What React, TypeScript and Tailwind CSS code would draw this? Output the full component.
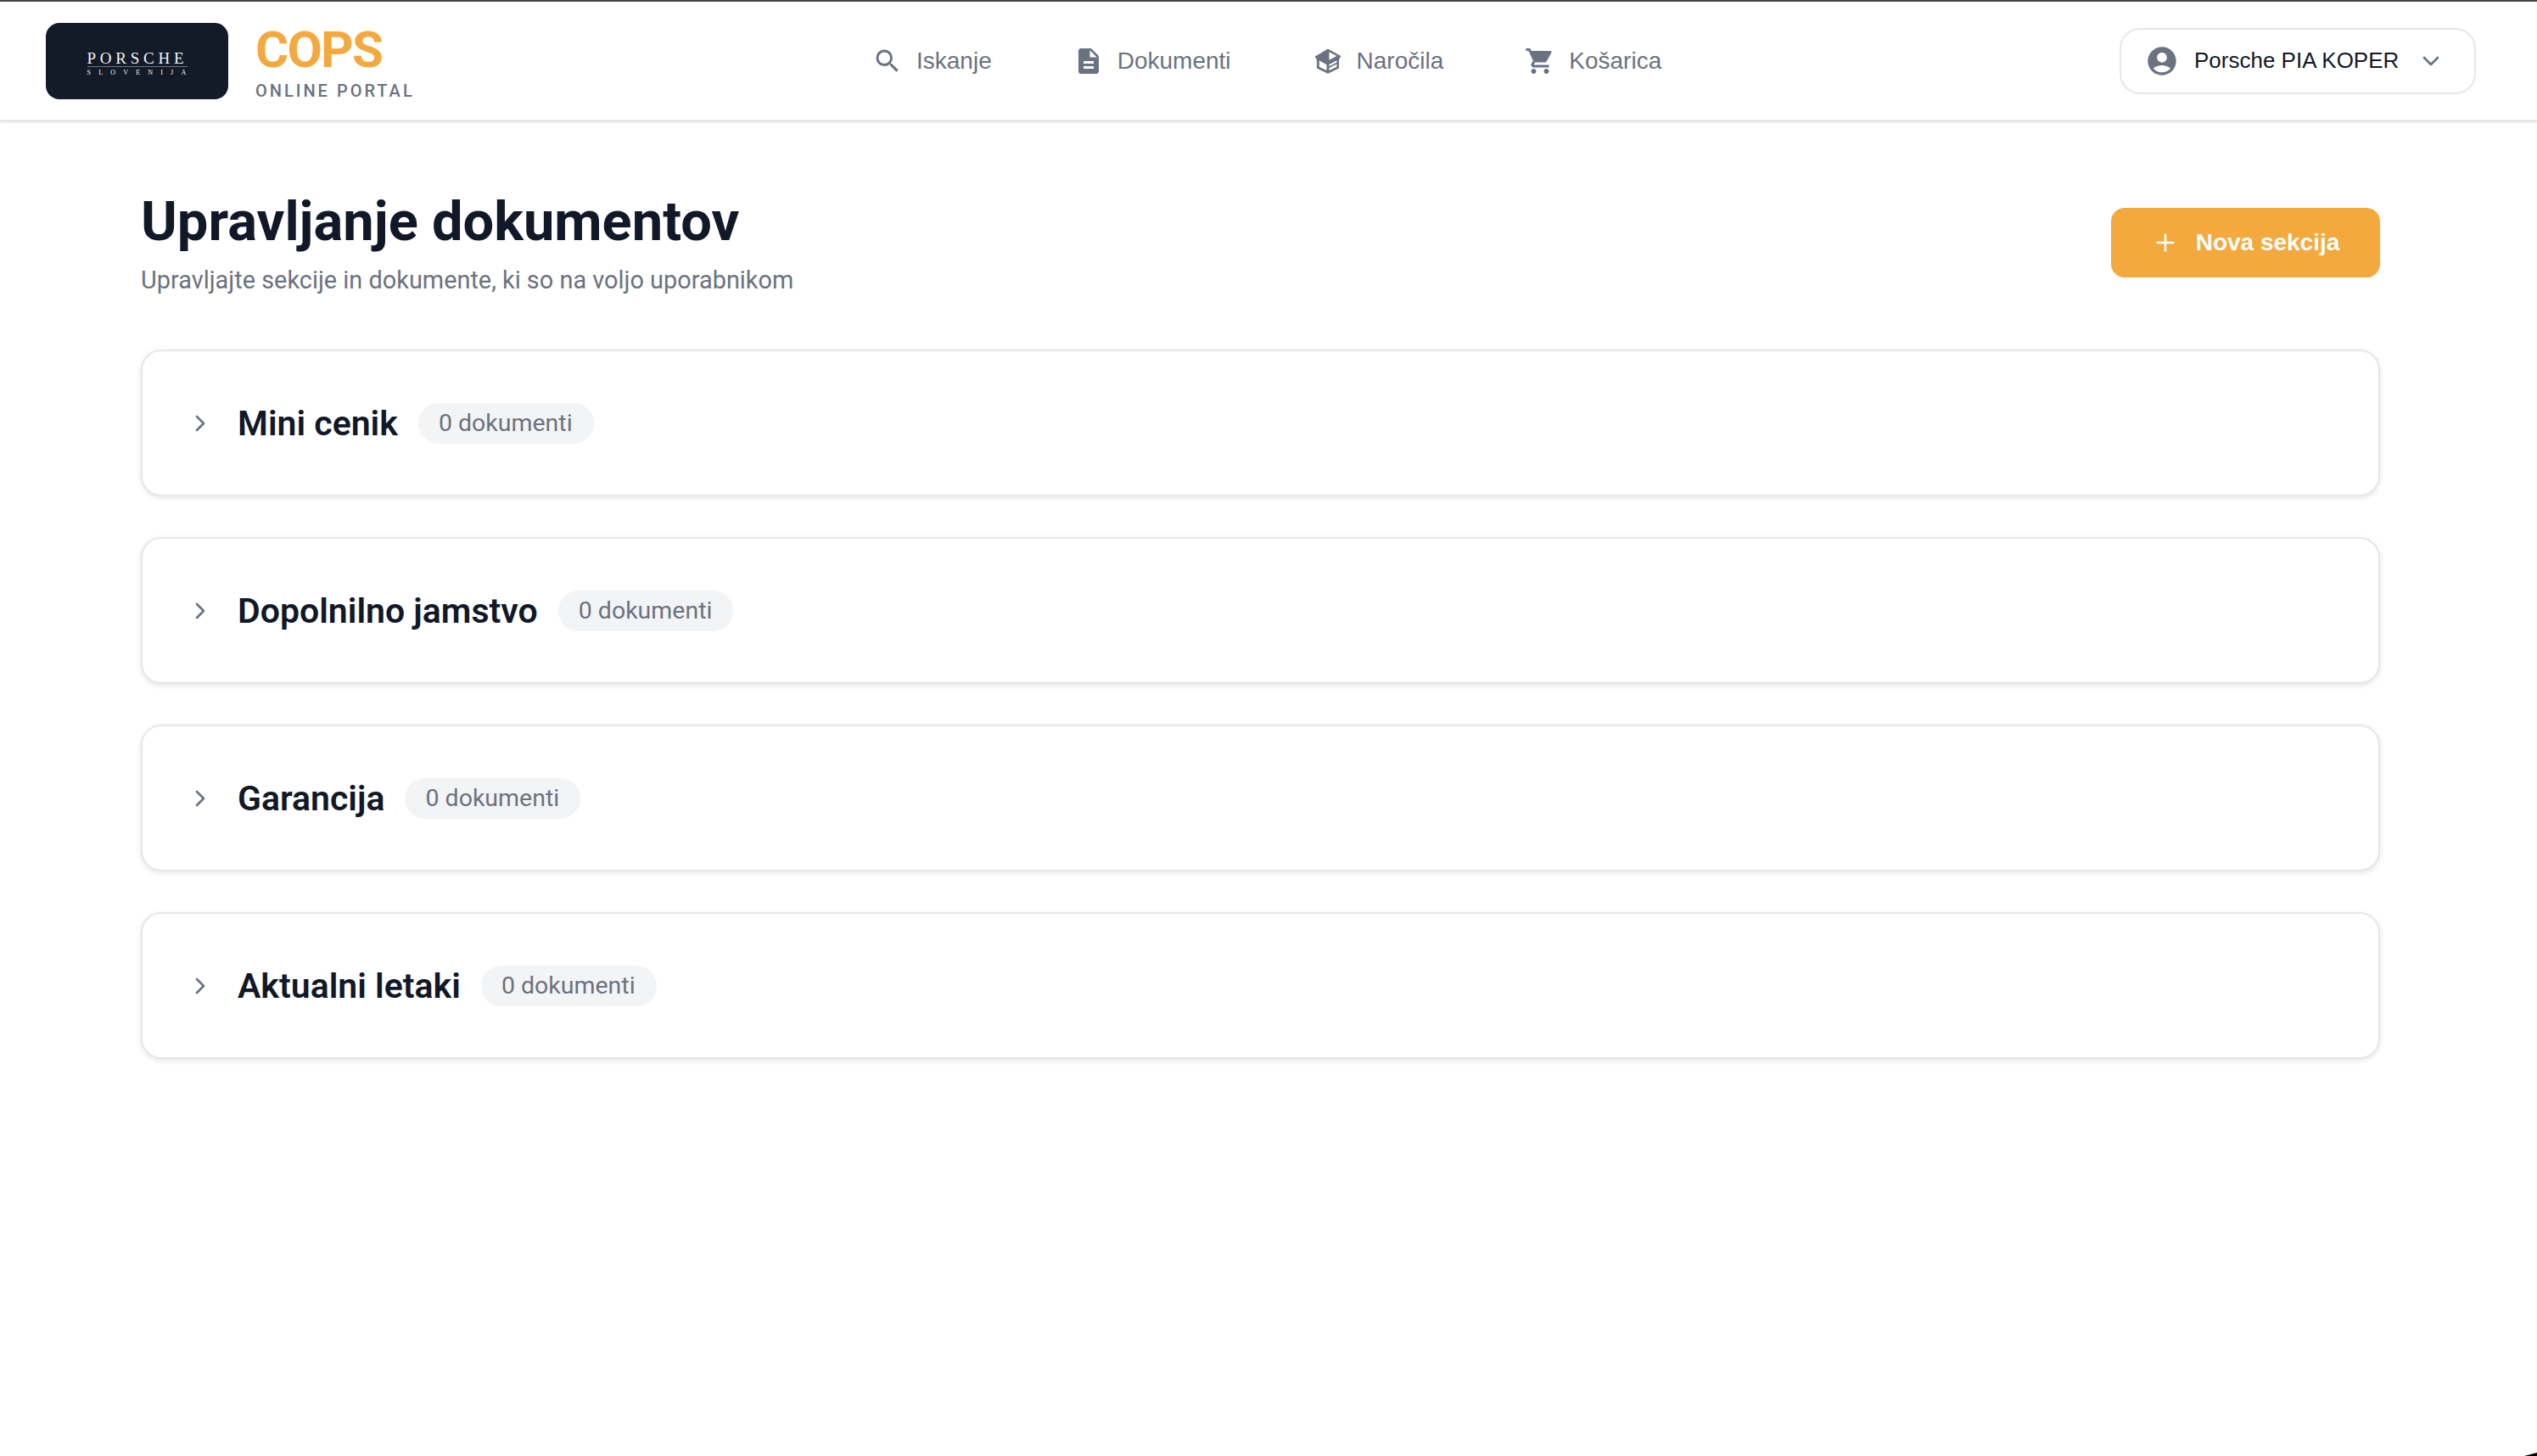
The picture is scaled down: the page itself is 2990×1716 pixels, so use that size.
import { ChevronDown, ChevronRight, Plus } from "lucide-react";
import { MdAccountCircle, MdDescription, MdSearch, MdShoppingCart } from "react-icons/md";

const BoxIcon = () => (
  <svg viewBox="0 0 24 24" className="h-[36px] w-[36px]" fill="currentColor">
    <path d="M12 2.4 22.2 8 20.7 11 V17.6 L12 21.8 3.3 17.6 V11 L1.8 8.5 Z" />
    <path d="M13 4.8 19 8 13 11.2 Z M13 14.6 19 11.5 V13 L13 16.1 Z M13 17.4 19 14.4 V16.5 L13 19.3 Z M5.2 11.5 11 14.8 V19.3 L5.2 16.5 Z" fill="#ffffff" />
  </svg>
);

const navItems = [
  { label: "Iskanje", icon: <MdSearch className="h-[36px] w-[36px]" /> },
  { label: "Dokumenti", icon: <MdDescription className="h-[36px] w-[36px]" /> },
  { label: "Naročila", icon: <BoxIcon /> },
  { label: "Košarica", icon: <MdShoppingCart className="h-[36px] w-[36px]" /> },
];

const sections = ["Mini cenik", "Dopolnilno jamstvo", "Garancija", "Aktualni letaki"];

const SectionCard = ({ title }: { title: string }) => (
  <div className="flex h-[173px] items-center rounded-[24px] border-2 border-[#e5e7eb] bg-white pl-[52px] shadow-[0_2px_6px_rgba(0,0,0,0.1)]">
    <ChevronRight className="h-[32px] w-[32px] text-[#6b7280]" />
    <h3 className="ml-[28px] text-[41px] leading-[60px] font-semibold text-[#111827]">{title}</h3>
    <span className="ml-[24px] rounded-full bg-[#f3f4f6] py-[4px] pr-[25px] pl-[24px] text-[28.5px] leading-[40px] text-[#6b7280]">
      0 dokumenti
    </span>
  </div>
);

export default function App() {
  return (
    <div className="relative min-h-[1716px] bg-white font-['Roboto',sans-serif]">
      <header className="flex h-[143px] items-center border-t-2 border-b-2 border-t-[#444444] border-b-[#e5e7eb] bg-white shadow-sm">
        <div className="ml-[54px] flex h-[90px] w-[215px] flex-col items-center justify-center rounded-[16px] bg-[#131a28] font-['Liberation_Serif',serif] text-[#f3f4f6]">
          <div className="mt-[6px] flex w-[118px] flex-col">
            <span className="border-b border-[#6b7280] pb-[1px] text-[19px] leading-[17px] tracking-[0.25em] whitespace-nowrap">PORSCHE</span>
            <span className="mt-[3px] text-[8px] leading-[8px] tracking-[1.15em] whitespace-nowrap">SLOVENIJA</span>
          </div>
        </div>
        <div className="mt-[3px] ml-[32px] flex w-[200px] flex-col">
          <span className="text-[60px] leading-[66px] font-bold tracking-[-0.03em] text-[#f4a93f]">COPS</span>
          <span className="mt-[1px] text-[20px] leading-[28px] font-medium tracking-[0.15em] text-[#6b7280]">ONLINE PORTAL</span>
        </div>
        <nav className="ml-[527px] flex items-center gap-[96px]">
          {navItems.map((item) => (
            <div key={item.label} className="flex items-center gap-[16px] font-['Liberation_Sans',sans-serif] text-[28px] text-[#6b7280]">
              {item.icon}
              <span>{item.label}</span>
            </div>
          ))}
        </nav>
        <button className="mr-[72px] ml-auto flex h-[78px] w-[420px] items-center rounded-[24px] border-2 border-[#e5e7eb] bg-white pl-[28px] font-['Liberation_Sans',sans-serif] text-[26px] text-[#111827]">
          <MdAccountCircle className="h-[40px] w-[40px] text-[#6b7280]" />
          <span className="ml-[18px]">Porsche PIA KOPER</span>
          <ChevronDown className="ml-[22px] h-[32px] w-[32px] text-[#6b7280]" />
        </button>
      </header>

      <main className="ml-[166px] w-[2639px] pt-[82px]">
        <div className="flex items-start justify-between">
          <div>
            <h1 className="text-[65px] leading-[72px] font-bold text-[#111827]">Upravljanje dokumentov</h1>
            <p className="mt-[13px] text-[28.9px] leading-[40px] text-[#6b7280]">Upravljajte sekcije in dokumente, ki so na voljo uporabnikom</p>
          </div>
          <button className="mt-[20px] flex h-[82px] w-[317px] items-center justify-center gap-[20px] rounded-[16px] bg-[#f4a93f] font-['Liberation_Sans',sans-serif] text-[28px] font-bold text-white">
            <Plus className="h-[32px] w-[32px]" />
            Nova sekcija
          </button>
        </div>
        <div className="mt-[62px] flex flex-col gap-[48px]">
          {sections.map((s) => (
            <SectionCard key={s} title={s} />
          ))}
        </div>
      </main>

      <svg viewBox="0 0 15 4" className="absolute right-0 bottom-0 h-[4px] w-[15px]">
        <polygon points="15,0 15,4 0,4" fill="#000000" />
      </svg>
    </div>
  );
}
